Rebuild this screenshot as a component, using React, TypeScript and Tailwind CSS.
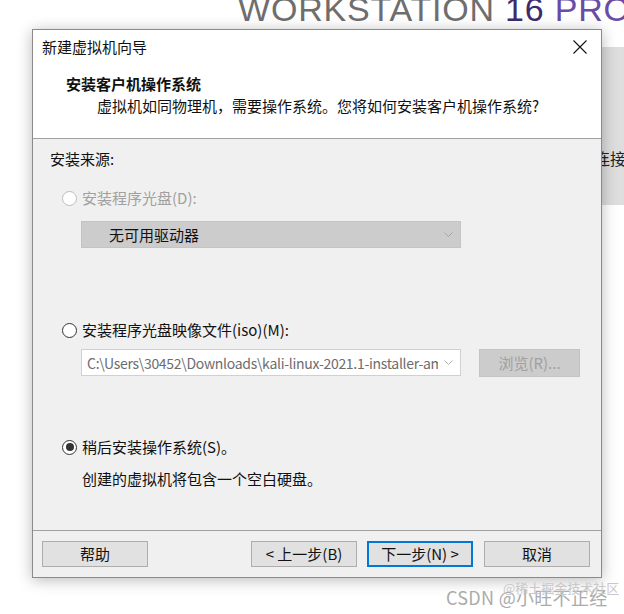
import React from 'react';

const font = { fontFamily: '"Noto Sans CJK SC", "Noto Sans", sans-serif' };

const Radio = ({ checked = false, disabled = false }: { checked?: boolean; disabled?: boolean }) => (
  <span
    className={`flex h-[15px] w-[15px] shrink-0 items-center justify-center rounded-full border bg-white ${
      disabled ? 'border-[#bcbcbc]' : 'border-[#333333]'
    }`}
  >
    {checked && <span className="h-[8px] w-[8px] rounded-full bg-[#333333]" />}
  </span>
);

const Chevron = ({ color }: { color: string }) => (
  <svg width="9" height="5" viewBox="0 0 9 5" className="shrink-0">
    <path d="M0.5 0.5 L4.5 4.5 L8.5 0.5" fill="none" stroke={color} strokeWidth="1" />
  </svg>
);

const Button = ({ label, focused = false }: { label: string; focused?: boolean }) => (
  <div
    className={`flex h-[26px] w-[106px] items-center justify-center bg-[#e1e1e1] text-[15px] leading-[20px] text-[#111] ${
      focused ? 'border-2 border-[#0078d7]' : 'border border-[#adadad]'
    }`}
  >
    {label}
  </div>
);

export default function App() {
  return (
    <div className="relative h-[614px] w-[624px] overflow-hidden bg-white" style={font}>
      {/* app behind the dialog */}
      <div
        className="absolute left-[238px] top-[-9px] whitespace-nowrap text-[34px] leading-[36px] tracking-[0.8px]"
        style={{ fontFamily: '"Liberation Sans", Arial, sans-serif' }}
      >
        <span className="text-[#6e6e6e]">WORKSTATION </span>
        <span className="text-[#3d2b6e]">16 </span>
        <span className="text-[#6a4ba6]">PRO</span>
      </div>
      <div className="absolute left-[420px] top-[47px] h-[158px] w-[204px] bg-gradient-to-r from-[#cfcfcf] to-[#dedede]" />
      <div className="absolute left-[594px] top-[148px] whitespace-nowrap text-[16px] leading-[20px] text-[#222]">连接</div>

      {/* dialog */}
      <div className="absolute left-[32px] top-[29px] flex h-[549px] w-[570px] flex-col border border-[#8a8a8a] bg-[#f0f0f0] shadow-[0_2px_14px_rgba(0,0,0,0.28)]">
        <div className="h-[109px] border-b border-[#a0a0a0] bg-white">
          <div className="flex items-center justify-between pl-[9px] pr-[14px] pt-[7px]">
            <span className="text-[15px] leading-[20px] text-[#111]">新建虚拟机向导</span>
            <svg width="14" height="14" viewBox="0 0 14 14">
              <path d="M0.5 0.5 L13.5 13.5 M13.5 0.5 L0.5 13.5" stroke="#111" strokeWidth="1.1" />
            </svg>
          </div>
          <div className="mt-[17px] pl-[33px] text-[15px] font-bold leading-[20px] text-[#111]">安装客户机操作系统</div>
          <div className="mt-[2px] pl-[64px] text-[15px] leading-[20px] text-[#111]">
            虚拟机如同物理机，需要操作系统。您将如何安装客户机操作系统?
          </div>
        </div>

        <div className="flex flex-1 flex-col pl-[17px] text-[15px] leading-[20px] text-[#111]">
          <div className="mt-[10px]">安装来源:</div>

          <div className="mt-[19px] flex items-center gap-[5px] pl-[12px]">
            <Radio disabled />
            <span className="text-[#a0a0a0]">安装程序光盘(D):</span>
          </div>
          <div className="ml-[31px] mt-[13px] flex h-[27px] w-[380px] items-center justify-between border border-[#c4c4c4] bg-[#cccccc] pl-[27px] pr-[7px]">
            <span>无可用驱动器</span>
            <Chevron color="#a6a6a6" />
          </div>

          <div className="mt-[72px] flex items-center gap-[5px] pl-[12px]">
            <Radio />
            <span>安装程序光盘映像文件(iso)(M):</span>
          </div>
          <div className="ml-[31px] mt-[9px] flex items-start gap-[18px]">
            <div className="flex h-[27px] w-[380px] items-center border border-[#d0d0d0] bg-white pl-[5px] pr-[7px]">
              <span className="min-w-0 flex-1 overflow-hidden whitespace-nowrap text-[14px] tracking-[-0.3px] text-[#6d6d6d]">
                C:\Users\30452\Downloads\kali-linux-2021.1-installer-amd64.iso
              </span>
              <span className="ml-[6px]">
                <Chevron color="#b0b0b0" />
              </span>
            </div>
            <div className="flex h-[28px] w-[101px] items-center justify-center border border-[#c4c4c4] bg-[#cccccc] text-[#a0a0a0]">
              浏览(R)...
            </div>
          </div>

          <div className="mt-[60px] flex items-center gap-[5px] pl-[12px]">
            <Radio checked />
            <span>稍后安装操作系统(S)。</span>
          </div>
          <div className="mt-[12px] pl-[32px]">创建的虚拟机将包含一个空白硬盘。</div>
        </div>

        <div className="flex h-[47px] items-start border-t border-[#a0a0a0] pl-[9px] pr-[11px] pt-[10px]">
          <Button label="帮助" />
          <div className="ml-auto flex gap-[10px]">
            <Button label="< 上一步(B)" />
            <Button label="下一步(N) >" focused />
          </div>
          <div className="ml-[11px]">
            <Button label="取消" />
          </div>
        </div>
      </div>

      {/* watermark */}
      <div className="absolute left-[446px] top-[585px] whitespace-nowrap text-[18px] leading-[24px] tracking-[0.3px] text-[#ababab]">
        CSDN @小旺不正经
      </div>
      <div className="absolute left-[503px] top-[580px] whitespace-nowrap text-[13px] leading-[16px] text-[#c8c8c8]">
        @稀土掘金技术社区
      </div>
    </div>
  );
}
